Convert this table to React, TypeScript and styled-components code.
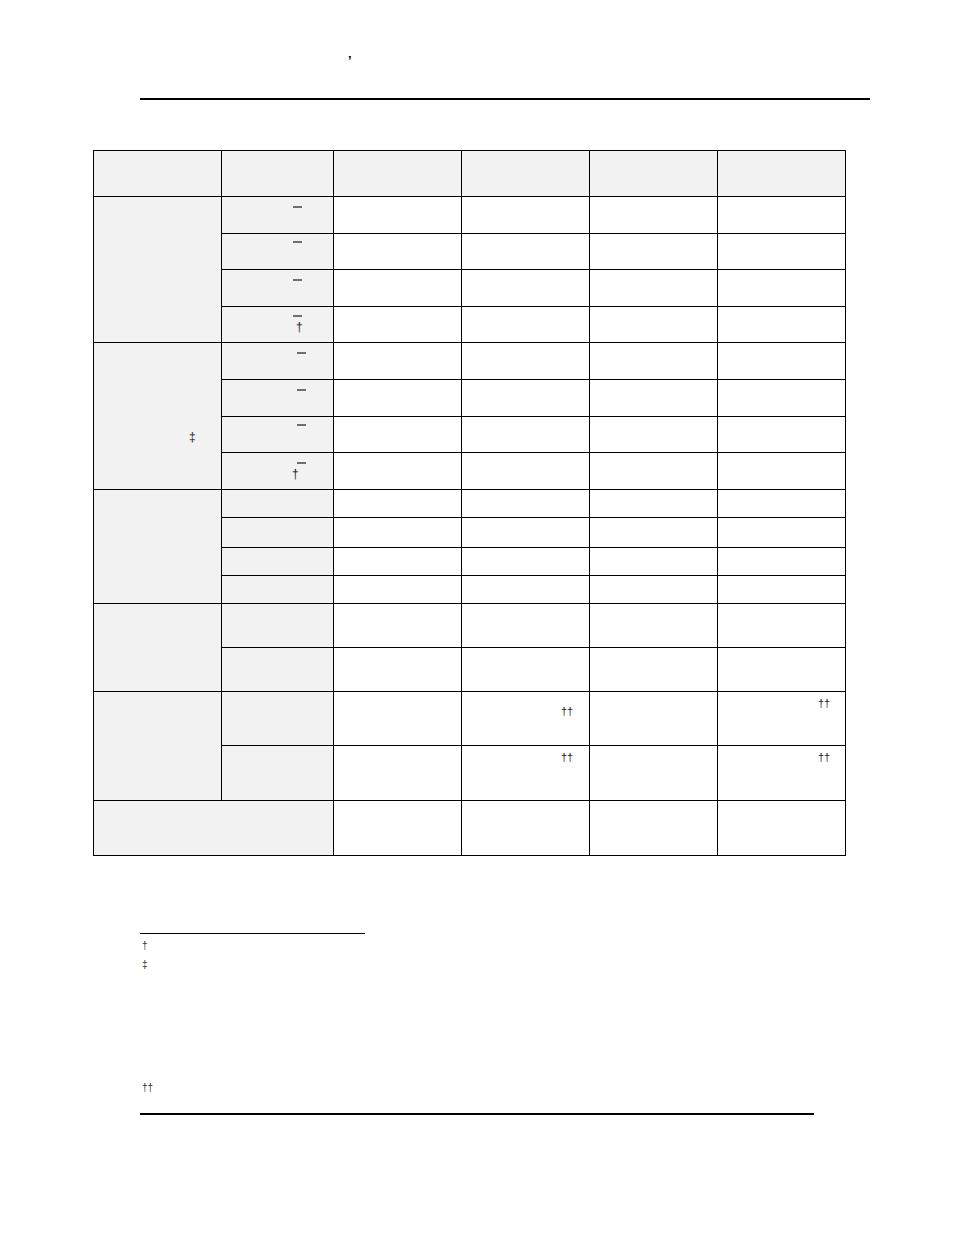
import React from 'react';
import styled, { createGlobalStyle } from 'styled-components';

const GlobalStyle = createGlobalStyle`
  html, body {
    margin: 0;
    padding: 0;
    background: #fff;
  }
  body {
    font-family: "Liberation Sans", Arial, sans-serif;
    color: #000;
  }
`;

type Mark = { text?: string; bar?: boolean; x: number; y: number; size?: number };
type CellData = { span?: number; rowSpan?: number; shade?: boolean; marks?: Mark[] };
type RowData = { h: number; cells: CellData[] };

const blank = (n: number): CellData[] => Array.from({ length: n }, () => ({}));

const bar = (x: number, y: number, dagger?: { x: number; y: number }): Mark[] =>
  dagger ? [{ bar: true, x, y }, { text: '†', x: dagger.x, y: dagger.y, size: 12 }] : [{ bar: true, x, y }];

const rows: RowData[] = [
  { h: 46, cells: Array.from({ length: 6 }, () => ({ shade: true })) },
  // group 1
  { h: 37, cells: [{ rowSpan: 4, shade: true }, { shade: true, marks: bar(71, 9) }, ...blank(4)] },
  { h: 36, cells: [{ shade: true, marks: bar(71, 7) }, ...blank(4)] },
  { h: 37, cells: [{ shade: true, marks: bar(71, 9) }, ...blank(4)] },
  { h: 36, cells: [{ shade: true, marks: bar(71, 8, { x: 74, y: 5 }) }, ...blank(4)] },
  // group 2
  { h: 37, cells: [{ rowSpan: 4, shade: true, marks: [{ text: '‡', x: 95, y: 89, size: 12 }] }, { shade: true, marks: bar(75, 9) }, ...blank(4)] },
  { h: 37, cells: [{ shade: true, marks: bar(75, 9) }, ...blank(4)] },
  { h: 36, cells: [{ shade: true, marks: bar(75, 7) }, ...blank(4)] },
  { h: 37, cells: [{ shade: true, marks: bar(75, 9, { x: 70, y: 5 }) }, ...blank(4)] },
  // group 3
  { h: 28, cells: [{ rowSpan: 4, shade: true }, { shade: true }, ...blank(4)] },
  { h: 30, cells: [{ shade: true }, ...blank(4)] },
  { h: 28, cells: [{ shade: true }, ...blank(4)] },
  { h: 28, cells: [{ shade: true }, ...blank(4)] },
  // group 4
  { h: 44, cells: [{ rowSpan: 2, shade: true }, { shade: true }, ...blank(4)] },
  { h: 44, cells: [{ shade: true }, ...blank(4)] },
  // group 5
  {
    h: 54,
    cells: [
      { rowSpan: 2, shade: true },
      { shade: true },
      {},
      { marks: [{ text: '††', x: 99, y: 14, size: 11 }] },
      {},
      { marks: [{ text: '††', x: 100, y: 6, size: 11 }] },
    ],
  },
  {
    h: 55,
    cells: [
      { shade: true },
      {},
      { marks: [{ text: '††', x: 99, y: 6, size: 11 }] },
      {},
      { marks: [{ text: '††', x: 100, y: 6, size: 11 }] },
    ],
  },
  // total
  { h: 55, cells: [{ span: 2, shade: true }, ...blank(4)] },
];

const colWidths = [128, 112, 128, 128, 128, 128];

export default function App() {
  return (
    <>
      <GlobalStyle />
      <Page>
        <RunningHead>
          <Tick>’</Tick>
        </RunningHead>
        <HeadRule />

        <Table>
          <colgroup>
            {colWidths.map((w, i) => (
              <col key={i} style={{ width: w }} />
            ))}
          </colgroup>
          <tbody>
            {rows.map((r, ri) => (
              <tr key={ri}>
                {r.cells.map((c, ci) => (
                  <Cell key={ci} colSpan={c.span} rowSpan={c.rowSpan} $shade={c.shade} $h={r.h}>
                    {c.marks?.map((m, mi) =>
                      m.bar ? (
                        <Bar key={mi} $x={m.x} $y={m.y} />
                      ) : (
                        <Glyph key={mi} $x={m.x} $y={m.y} $size={m.size ?? 12}>
                          {m.text}
                        </Glyph>
                      ),
                    )}
                  </Cell>
                ))}
              </tr>
            ))}
          </tbody>
        </Table>

        <Notes>
          <NoteRule />
          <Note $top={6}>†</Note>
          <Note $top={7}>‡</Note>
          <Note $top={111}>††</Note>
        </Notes>
        <FootRule />
      </Page>
    </>
  );
}

// ------------ styles ------------
const Page = styled.div`
  width: 954px;
  min-height: 1235px;
  padding-top: 54px;
  box-sizing: border-box;
`;

const RunningHead = styled.div`
  height: 44px;
  padding-left: 348px;
  box-sizing: border-box;
`;

const Tick = styled.span`
  display: block;
  font-size: 13px;
  line-height: 13px;
  font-weight: bold;
  color: #000;
`;

const HeadRule = styled.div`
  margin-left: 140px;
  width: 730px;
  height: 2px;
  background: #000;
`;

const Table = styled.table`
  margin: 50px 0 0 93px;
  border-collapse: collapse;
  table-layout: fixed;
  width: 753px;
`;

const Cell = styled.td<{ $shade?: boolean; $h: number }>`
  border: 1px solid #000;
  padding: 0;
  height: ${(p) => p.$h - 1}px;
  vertical-align: top;
  overflow: hidden;
  background: ${(p) => (p.$shade ? '#f2f2f2' : '#fff')};
`;

const Bar = styled.span<{ $x: number; $y: number }>`
  display: block;
  margin: ${(p) => p.$y}px 0 0 ${(p) => p.$x}px;
  width: 9px;
  height: 2px;
  background: #6e6e6e;
`;

const Glyph = styled.span<{ $x: number; $y: number; $size: number }>`
  display: block;
  margin: ${(p) => p.$y}px 0 0 ${(p) => p.$x}px;
  font-size: ${(p) => p.$size}px;
  line-height: 10px;
  color: #222;
`;

const Notes = styled.div`
  margin: 77px 0 0 140px;
`;

const NoteRule = styled.div`
  width: 225px;
  height: 1px;
  background: #000;
`;

const Note = styled.div<{ $top: number }>`
  margin-top: ${(p) => p.$top}px;
  padding-left: 2px;
  font-size: 10px;
  line-height: 12px;
  color: #333;
`;

const FootRule = styled.div`
  margin: 19px 0 0 140px;
  width: 674px;
  height: 2px;
  background: #000;
`;
